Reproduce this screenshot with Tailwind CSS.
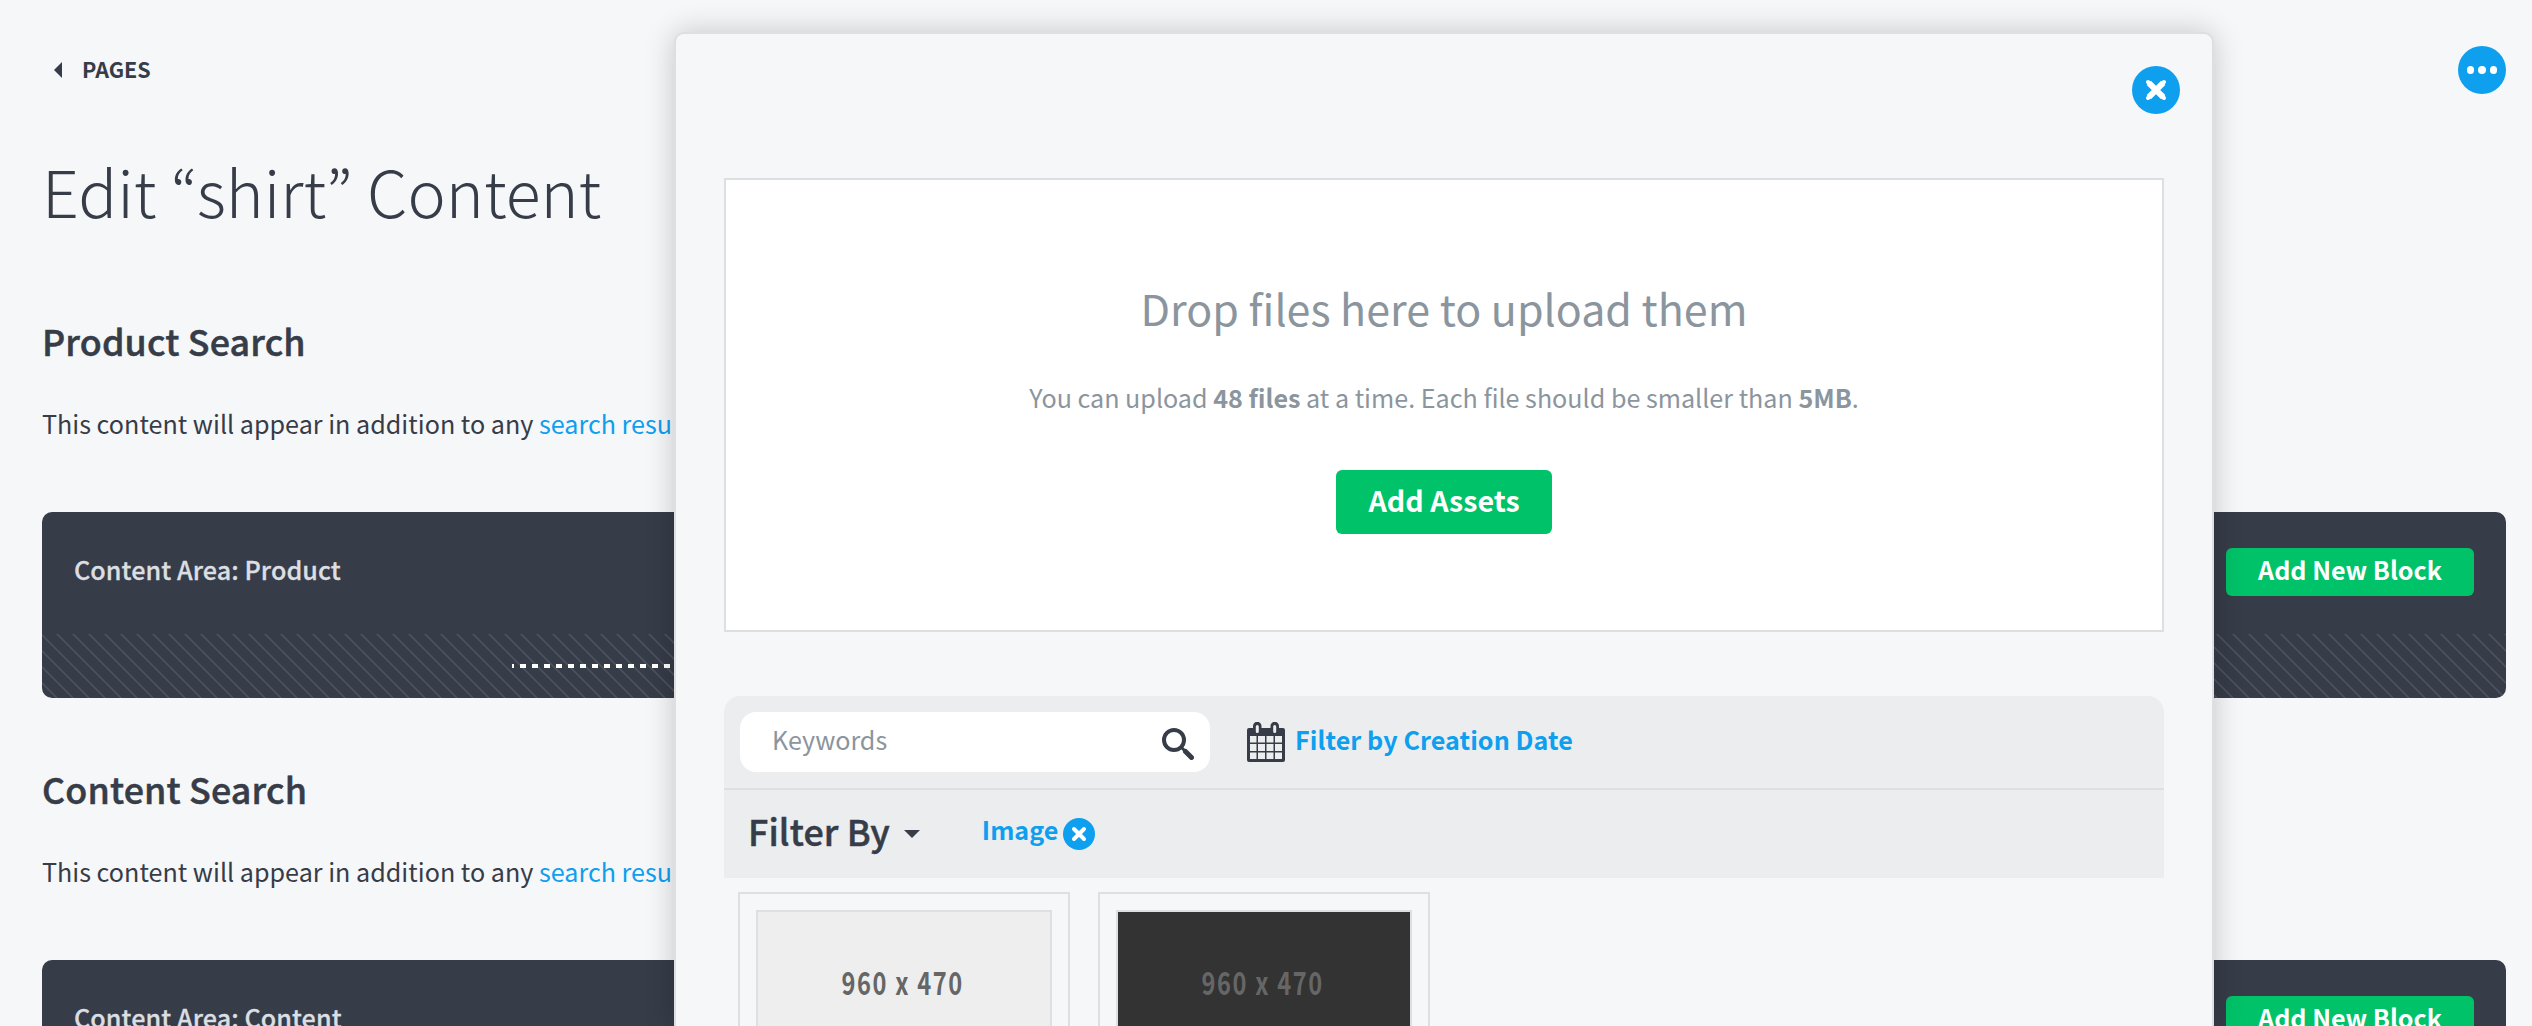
<!DOCTYPE html>
<html lang="en">
<head>
<meta charset="utf-8">
<title>Edit “shirt” Content</title>
<script src="https://cdn.jsdelivr.net/npm/@tailwindcss/browser@4"></script>
</head>
<body class="relative h-[1026px] overflow-hidden bg-[#f6f7f9] font-['Noto_Sans_CJK_KR','Noto_Sans',sans-serif] text-[25.12px] leading-10 text-[#363c48]">
<main class="h-[1026px] overflow-hidden pl-[42px] pr-[26px] pt-[46px]">
  <header class="flex h-12 items-center justify-between">
    <a class="flex items-center pl-3">
      <svg class="h-4 w-2" viewBox="0 0 8 16" fill="#363c48"><path d="M8 0v16L0 8z"/></svg>
      <span class="pb-[3px] pl-5 text-[21.49px] font-bold">PAGES</span>
    </a>
    <button class="flex size-12 items-center justify-center gap-1 rounded-full bg-[#0e9fee]">
      <span class="size-[7.3px] rounded-full bg-white"></span><span class="size-[7.3px] rounded-full bg-white"></span><span class="size-[7.3px] rounded-full bg-white"></span>
    </button>
  </header>
  <h1 class="mt-14 text-[64.45px] font-light leading-20">Edit “shirt” Content</h1>

  <section class="mt-[86px]">
    <h2 class="text-[35.8px] font-medium leading-12 tracking-[0.15px] [-webkit-text-stroke:0.5px]">Product Search</h2>
    <p class="mt-[39px] tracking-[0.01px]">This content will appear in addition to any <a class="text-[#0e9fee]">search results</a></p>
    <div class="mt-[69px] overflow-hidden rounded-[10px] bg-[#363c48]">
      <div class="flex h-[122px] items-start justify-between px-8 pt-9">
        <h3 class="pb-[5px] font-medium leading-[43px] tracking-[0.08px] text-[#dcdfe1] [-webkit-text-stroke:0.3px]">Content Area: Product</h3>
        <button class="h-12 w-[248px] rounded-md bg-[#00c268] pb-1.5 font-bold text-white">Add New Block</button>
      </div>
      <div class="relative h-16">
        <svg class="block h-full w-full"><defs><pattern id="hatch" width="16" height="16" patternUnits="userSpaceOnUse"><path d="M-2 -1L18 19M-18 -1L2 19M14 -1L34 19" stroke="#4f555f" stroke-width="1.5" fill="none"/></pattern></defs><rect width="100%" height="100%" fill="url(#hatch)"/></svg>
        <div class="absolute inset-x-[470px] top-[30px] h-1 bg-[repeating-linear-gradient(90deg,#fff_0_2px,transparent_2px_8px,#fff_8px_12px)]"></div>
      </div>
    </div>
  </section>

  <section class="mt-[66px]">
    <h2 class="text-[35.8px] font-medium leading-12 tracking-[0.15px] [-webkit-text-stroke:0.5px]">Content Search</h2>
    <p class="mt-[39px] tracking-[0.01px]">This content will appear in addition to any <a class="text-[#0e9fee]">search results</a></p>
    <div class="mt-[69px] overflow-hidden rounded-[10px] bg-[#363c48]">
      <div class="flex h-[122px] items-start justify-between px-8 pt-9">
        <h3 class="pb-[5px] font-medium leading-[43px] tracking-[0.08px] text-[#dcdfe1] [-webkit-text-stroke:0.3px]">Content Area: Content</h3>
        <button class="h-12 w-[248px] rounded-md bg-[#00c268] pb-1.5 font-bold text-white">Add New Block</button>
      </div>
    </div>
  </section>
</main>

<div class="absolute left-[674px] top-8 h-[994px] w-[1540px] rounded-t-[10px] border-2 border-b-0 border-[#dddfe2] bg-[#f6f7f9] shadow-[0_0_30px_rgba(0,0,0,0.2)]">
  <div class="flex h-full flex-col overflow-hidden">
  <div class="flex shrink-0 justify-end px-8 pt-8">
    <button class="flex size-12 items-center justify-center rounded-full bg-[#0e9fee]">
      <svg class="size-12" viewBox="0 0 48 48"><path d="M16.800 16.800l14.400 14.400M31.200 16.800L16.800 31.200" stroke="#fff" stroke-width="6"/><path d="M16 16l16 16M32 16L16 32" stroke="#fff" stroke-width="4" stroke-linecap="round"/></svg>
    </button>
  </div>
  <div class="mx-12 mt-16 flex h-[454px] shrink-0 flex-col items-center border-2 border-[#dddfe2] bg-white pt-[99px] text-[#8b959e]">
    <h2 class="text-[42.97px] leading-14">Drop files here to upload them</h2>
    <p class="mt-[42px]">You can upload <b>48 files</b> at a time. Each file should be smaller than <b>5MB</b>.</p>
    <button class="mt-[53px] h-16 w-[216px] rounded-md bg-[#00c268] pb-[5px] text-[28.64px] font-bold text-white">Add Assets</button>
  </div>
  <div class="mx-12 mt-16 shrink-0 rounded-t-2xl bg-[#ecedef]">
    <div class="flex h-[94px] items-center border-b-2 border-[#dddfe2] pl-4">
      <div class="flex h-[60px] w-[470px] items-center justify-between rounded-2xl bg-white pl-8 pr-4">
        <span class="pb-[7px] text-[#8b959e]">Keywords</span>
        <svg class="mt-1 size-8" viewBox="0 0 32 32" fill="none" stroke="#363c48"><circle cx="12" cy="12" r="10" stroke-width="4"/><path d="M19.500 19.500L23 23" stroke-width="3"/><path d="M23.500 23.500l6 6" stroke-width="5" stroke-linecap="round"/></svg>
      </div>
      <svg class="ml-[37px] h-10 w-[38px]" viewBox="0 0 38 40"><path fill="#363c48" fill-rule="evenodd" d="M2 6h4V4a4 4 0 0 1 8.500 0v2h9V4a4 4 0 0 1 8.500 0v2H36a2 2 0 0 1 2 2v30a2 2 0 0 1-2 2H2a2 2 0 0 1-2-2V8a2 2 0 0 1 2-2zM3 14v6.500h6.500V14zM11 14v6.500h7V14zM19.500 14v6.500h7V14zM28 14v6.500h7V14zM3 22v7h6.500v-7zM11 22v7h7v-7zM19.500 22v7h7v-7zM28 22v7h7v-7zM3 30.500v6.500h6.500v-6.500zM11 30.500v6.500h7v-6.500zM19.500 30.500v6.500h7v-6.500zM28 30.500v6.500h7v-6.500z"/><path stroke="#ecedef" stroke-width="3" stroke-linecap="round" d="M10.300 4.500v5M27.700 4.500v5"/></svg>
      <a class="pb-[7px] pl-2.5 font-bold tracking-[0.08px] text-[#0e9fee]">Filter by Creation Date</a>
    </div>
    <div class="flex h-[88px] items-center pl-6">
      <span class="pb-2 text-[35.8px] font-medium tracking-[0.15px] [-webkit-text-stroke:0.5px]">Filter By</span>
      <svg class="ml-3.5 h-2 w-4" viewBox="0 0 16 8" fill="#363c48"><path d="M0 0h16L8 8z"/></svg>
      <a class="ml-[62px] pb-2.5 font-bold text-[#0e9fee]">Image</a>
      <svg class="ml-[5px] size-8" viewBox="0 0 32 32"><circle cx="16" cy="16" r="16" fill="#0e9fee"/><path d="M11 11l10 10M21 11L11 21" stroke="#fff" stroke-width="4" stroke-linecap="round"/></svg>
    </div>
  </div>
  <div class="mx-12 mt-3.5 flex min-h-0 flex-1 gap-7 overflow-hidden pl-3.5">
    <div class="h-[280px] w-[332px] border-2 border-[#dddfe2] p-4">
      <div class="flex h-[147px] items-center justify-center border-2 border-[#dddfe2] bg-[#eee] text-[31.5px] font-bold text-[#666]"><span class="-ml-[3px] scale-x-[0.75] pb-[5px] tracking-[2.2px]">960 x 470</span></div>
    </div>
    <div class="h-[280px] w-[332px] border-2 border-[#dddfe2] p-4">
      <div class="flex h-[147px] items-center justify-center border-2 border-[#dddfe2] bg-[#333] text-[31.5px] font-bold text-[#666]"><span class="-ml-[3px] scale-x-[0.75] pb-[5px] tracking-[2.2px]">960 x 470</span></div>
    </div>
  </div>
  </div>
</div>
</body>
</html>
